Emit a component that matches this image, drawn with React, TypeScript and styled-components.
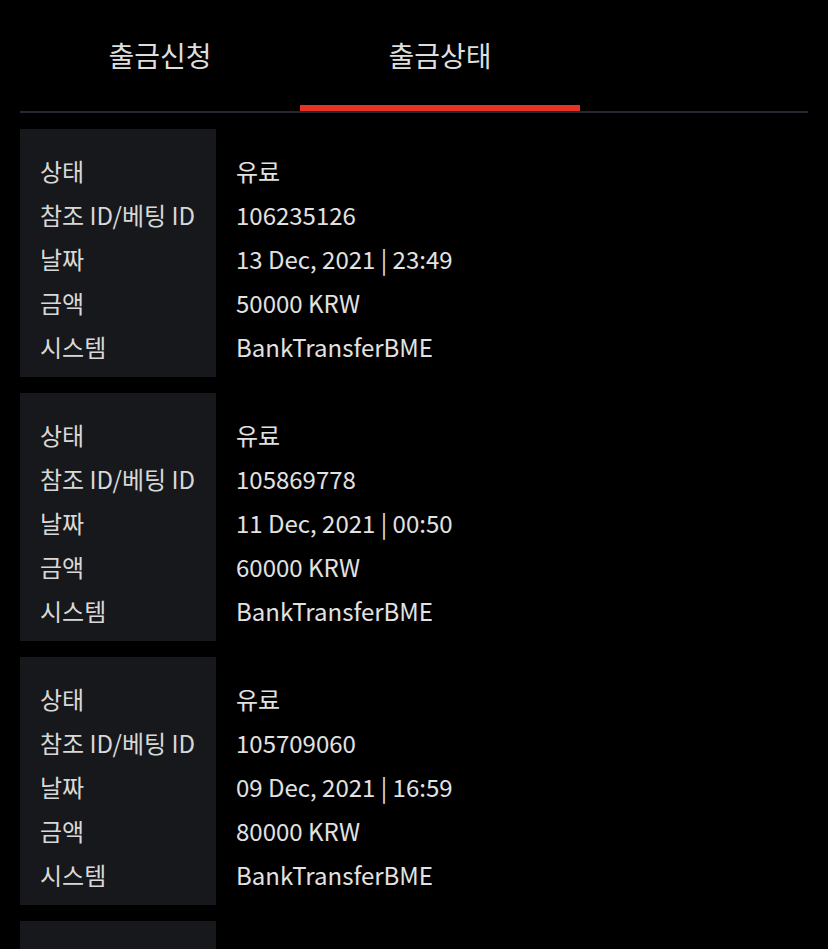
import React, { useState } from "react";
import styled, { createGlobalStyle } from "styled-components";

const GlobalStyle = createGlobalStyle`
  html, body {
    margin: 0;
    padding: 0;
    background: #000;
  }
  body {
    font-family: "Noto Sans CJK KR", "Noto Sans", sans-serif;
    color: #e4e4e4;
  }
`;

type Withdrawal = {
  status: string;
  refId: string;
  date: string;
  amount: string;
  system: string;
};

const withdrawals: Withdrawal[] = [
  {
    status: "유료",
    refId: "106235126",
    date: "13 Dec, 2021 | 23:49",
    amount: "50000 KRW",
    system: "BankTransferBME",
  },
  {
    status: "유료",
    refId: "105869778",
    date: "11 Dec, 2021 | 00:50",
    amount: "60000 KRW",
    system: "BankTransferBME",
  },
  {
    status: "유료",
    refId: "105709060",
    date: "09 Dec, 2021 | 16:59",
    amount: "80000 KRW",
    system: "BankTransferBME",
  },
  {
    status: "유료",
    refId: "105500231",
    date: "07 Dec, 2021 | 12:10",
    amount: "50000 KRW",
    system: "BankTransferBME",
  },
];

const labels = ["상태", "참조 ID/베팅 ID", "날짜", "금액", "시스템"];

const App = () => {
  const [tab, setTab] = useState(1);

  return (
    <Page>
      <GlobalStyle />
      <TabBar>
        {["출금신청", "출금상태"].map((title, i) => (
          <Tab key={title} active={tab === i} onClick={() => setTab(i)}>
            {title}
          </Tab>
        ))}
      </TabBar>
      <List>
        {withdrawals.map((w) => (
          <Card key={w.refId}>
            <Labels>
              {labels.map((l) => (
                <Line key={l}>{l}</Line>
              ))}
            </Labels>
            <Values>
              <Line>{w.status}</Line>
              <Line>{w.refId}</Line>
              <Line>{w.date}</Line>
              <Line>{w.amount}</Line>
              <Line>{w.system}</Line>
            </Values>
          </Card>
        ))}
      </List>
    </Page>
  );
};

export default App;

const Page = styled.div`
  padding: 0 20px;
  min-height: 949px;
  box-sizing: border-box;
`;

const TabBar = styled.div`
  display: flex;
  border-bottom: 2px solid #272733;
`;

const Tab = styled.div<{ active: boolean }>`
  width: 280px;
  height: 111px;
  box-sizing: border-box;
  padding-top: 4px;
  display: flex;
  align-items: center;
  justify-content: center;
  font-size: 28px;
  color: #dedede;
  cursor: pointer;
  border-bottom: 6px solid ${(p) => (p.active ? "#e63323" : "transparent")};
`;

const List = styled.div`
  display: flex;
  flex-direction: column;
  gap: 16px;
  padding-top: 16px;
`;

const Card = styled.div`
  display: flex;
  height: 248px;
`;

const Labels = styled.div`
  width: 196px;
  box-sizing: border-box;
  background: #17181c;
  padding: 20px 0 0 20px;
  color: #d8d8d8;
`;

const Values = styled.div`
  padding: 20px 0 0 20px;
  color: #e2e2e2;
`;

const Line = styled.div`
  font-size: 24px;
  line-height: 44px;
  white-space: nowrap;
`;
